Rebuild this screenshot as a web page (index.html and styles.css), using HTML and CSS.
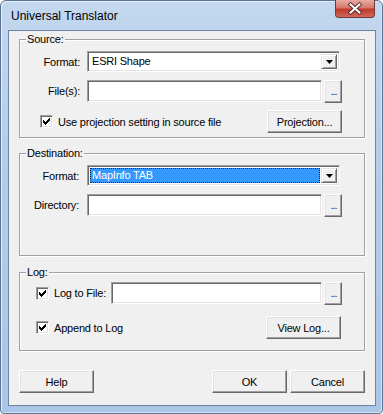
FILE: index.html
```html
<!DOCTYPE html>
<html lang="en">
<head>
<meta charset="utf-8">
<title>Universal Translator</title>
<link rel="stylesheet" href="styles.css">
</head>
<body>

<div class="window">
	<div class="titlebar">
		<span class="title">Universal Translator</span>
		<div class="close">
			<svg width="40" height="18" viewBox="0 0 40 18">
				<path d="M15.5 4.5 L24.5 12.5 M24.5 4.5 L15.5 12.5" stroke="#5b2a28" stroke-width="4" stroke-linecap="square"/>
				<path d="M15.5 4.5 L24.5 12.5 M24.5 4.5 L15.5 12.5" stroke="#fff" stroke-width="2" stroke-linecap="square"/>
			</svg>
		</div>
	</div>

	<div class="client">

		<!-- source -->
		<div class="group group_source">
			<span class="legend">Source:</span>
			<div class="row row_first">
				<span class="lbl">Format:</span>
				<div class="combo">
					<span class="combo_text">ESRI Shape</span>
					<span class="drop"><svg width="7" height="4" viewBox="0 0 7 4"><path d="M0 0h7L3.5 4z" fill="#000"/></svg></span>
				</div>
			</div>
			<div class="row row_gap">
				<span class="lbl">File(s):</span>
				<div class="edit"></div>
				<button class="btn dots">...</button>
			</div>
			<div class="row row_gap7">
				<span class="check check_src"><svg width="9" height="9" viewBox="0 0 9 9"><path d="M1 3h1v3H1zM2 4h1v3H2zM3 5h1v3H3zM4 4h1v3H4zM5 3h1v3H5zM6 2h1v3H6zM7 1h1v3H7z" fill="#000"/></svg></span>
				<span class="check_text">Use projection setting in source file</span>
				<button class="btn wide push_right">Projection...</button>
			</div>
		</div>

		<!-- destination -->
		<div class="group group_dest">
			<span class="legend">Destination:</span>
			<div class="row row_first">
				<span class="lbl lbl_dest">Format:</span>
				<div class="combo">
					<span class="combo_text selected">MapInfo TAB</span>
					<span class="drop"><svg width="7" height="4" viewBox="0 0 7 4"><path d="M0 0h7L3.5 4z" fill="#000"/></svg></span>
				</div>
			</div>
			<div class="row row_gap">
				<span class="lbl lbl_dest">Directory:</span>
				<div class="edit"></div>
				<button class="btn dots">...</button>
			</div>
		</div>

		<!-- log -->
		<div class="group group_log">
			<span class="legend">Log:</span>
			<div class="row row_log">
				<span class="check check_log"><svg width="9" height="9" viewBox="0 0 9 9"><path d="M1 3h1v3H1zM2 4h1v3H2zM3 5h1v3H3zM4 4h1v3H4zM5 3h1v3H5zM6 2h1v3H6zM7 1h1v3H7z" fill="#000"/></svg></span>
				<span class="check_text">Log to File:</span>
				<div class="edit edit_log"></div>
				<button class="btn dots">...</button>
			</div>
			<div class="row row_gap11">
				<span class="check check_log"><svg width="9" height="9" viewBox="0 0 9 9"><path d="M1 3h1v3H1zM2 4h1v3H2zM3 5h1v3H3zM4 4h1v3H4zM5 3h1v3H5zM6 2h1v3H6zM7 1h1v3H7z" fill="#000"/></svg></span>
				<span class="check_text">Append to Log</span>
				<button class="btn wide push_right view_log">View Log...</button>
			</div>
		</div>

		<div class="buttons">
			<button class="btn wide">Help</button>
			<button class="btn wide ok">OK</button>
			<button class="btn wide cancel">Cancel</button>
		</div>

	</div>
</div>

</body>
</html>
```

FILE: styles.css
```css
body {
	margin: 0;
	background: #fff;
	font-family: "Liberation Sans", Arial, sans-serif;
	font-size: 11px;
	letter-spacing: -0.2px;
	color: #000;
}

.window {
	width: 383px;
	height: 414px;
	box-sizing: border-box;
	display: flex;
	flex-direction: column;
	padding: 0 6px 7px 7px;
	border: 1px solid #5d7393;
	border-radius: 6px 6px 4px 4px;
	background: linear-gradient(#c3d8ef, #b4cce8 40%, #aac6e6);
	box-shadow: inset 1px 1px #e4eef9, inset -1px -1px #d6e4f4;
}

/* title bar */
.titlebar {
	height: 29px;
	display: flex;
	align-items: flex-start;
}
.title {
	margin: 8px 0 0 3px;
	font-size: 12px;
	line-height: 14px;
	letter-spacing: 0;
	color: #000;
}
.close {
	margin: -1px 1px 0 auto;
	width: 40px;
	height: 18px;
	border: 1px solid #6e3a3a;
	border-top: none;
	box-sizing: border-box;
	border-radius: 0 0 4px 4px;
	background: linear-gradient(#e7aba2, #d7786b 45%, #c0392b 55%, #d2695a);
}
.close svg { display: block; margin-left: -1px; }

/* client area */
.client {
	flex: 1;
	display: flex;
	flex-direction: column;
	padding: 0 10px;
	background: #f0f0f0;
	border: 1px solid #6f84a1;
}

/* group boxes */
.group {
	display: flex;
	flex-direction: column;
	border: 1px solid #a0a0a0;
	box-shadow: inset 1px 1px #fff, 1px 1px #fff;
}
.group_source { margin-top: 8px; padding-bottom: 4px; }
.group_dest { margin-top: 15px; padding-bottom: 38px; }
.group_log { margin-top: 16px; padding-bottom: 11px; }

.legend {
	align-self: flex-start;
	margin: -8px 0 0 6px;
	padding: 0 1px;
	line-height: 14px;
	background: #f0f0f0;
}

.row {
	display: flex;
	align-items: center;
	height: 23px;
}
.row_first { margin-top: 5px; height: 21px; }
.row_gap { margin-top: 8px; align-items: flex-start; }
.row_gap7 { margin-top: 7px; }
.row_gap11 { margin-top: 11px; }
.row_log { margin-top: 3px; align-items: flex-start; }

.lbl {
	width: 60px;
	margin-right: 7px;
	text-align: right;
}
.lbl_dest { width: 59px; margin-right: 8px; }

.row_gap .lbl { line-height: 22px; }

/* sunken controls */
.edit {
	width: 235px;
	height: 22px;
	box-sizing: border-box;
	background: #fff;
	border: 1px solid;
	border-color: #a0a0a0 #fff #fff #a0a0a0;
	box-shadow: inset 1px 1px #696969, inset -1px -1px #e3e3e3;
	margin-right: 2px;
}
.edit_log { width: 211px; margin-left: auto; }

.combo {
	width: 253px;
	height: 21px;
	box-sizing: border-box;
	display: flex;
	align-items: stretch;
	padding: 2px;
	background: #fff;
	border: 1px solid;
	border-color: #a0a0a0 #fff #fff #a0a0a0;
	box-shadow: inset 1px 1px #696969, inset -1px -1px #e3e3e3;
}
.combo_text {
	flex: 1;
	padding-left: 2px;
	line-height: 15px;
	margin: 0 1px 0 0;
	color: #000;
}
.combo_text.selected {
	background: #3399ff;
	color: #fff;
	outline: 1px dotted #222;
	outline-offset: -1px;
	padding-left: 2px;
}
.drop {
	width: 16px;
	box-sizing: border-box;
	display: flex;
	align-items: center;
	justify-content: center;
	background: #f0f0f0;
	border: 1px solid;
	border-color: #e3e3e3 #696969 #696969 #e3e3e3;
	box-shadow: inset 1px 1px #fff, inset -1px -1px #a0a0a0;
}

/* check boxes */
.check {
	width: 13px;
	height: 13px;
	box-sizing: border-box;
	display: flex;
	align-items: center;
	justify-content: center;
	background: #fff;
	border: 1px solid;
	border-color: #a0a0a0 #fff #fff #a0a0a0;
	box-shadow: inset 1px 1px #696969, inset -1px -1px #e3e3e3;
}
.check svg { display: block; }
.check_src { margin-left: 20px; }
.check_log { margin-left: 16px; }
.row_log .check { margin-top: 5px; }
.check_text { margin-left: 5px; }
.row_log .check_text { line-height: 22px; }

/* raised buttons */
.btn {
	margin: 0;
	padding: 0;
	height: 23px;
	box-sizing: border-box;
	font-family: "Liberation Sans", Arial, sans-serif;
	font-size: 11px;
	letter-spacing: -0.2px;
	color: #000;
	background: #f0f0f0;
	border: 1px solid;
	border-color: #fff #696969 #696969 #fff;
	box-shadow: inset -1px -1px #a0a0a0, inset 1px 1px #e3e3e3;
}
.dots {
	width: 18px;
	line-height: 21px;
	letter-spacing: -1px;
	color: #333;
	padding-left: 1px;
}
.row_log .dots { margin-right: 22px; }
.wide { width: 75px; }
.push_right { margin-left: auto; margin-right: 22px; }
.view_log { margin-right: 23px; }

.buttons {
	display: flex;
	margin-top: 19px;
}
.buttons .ok { margin-left: auto; }
.buttons .cancel { margin-left: 3px; }
```
